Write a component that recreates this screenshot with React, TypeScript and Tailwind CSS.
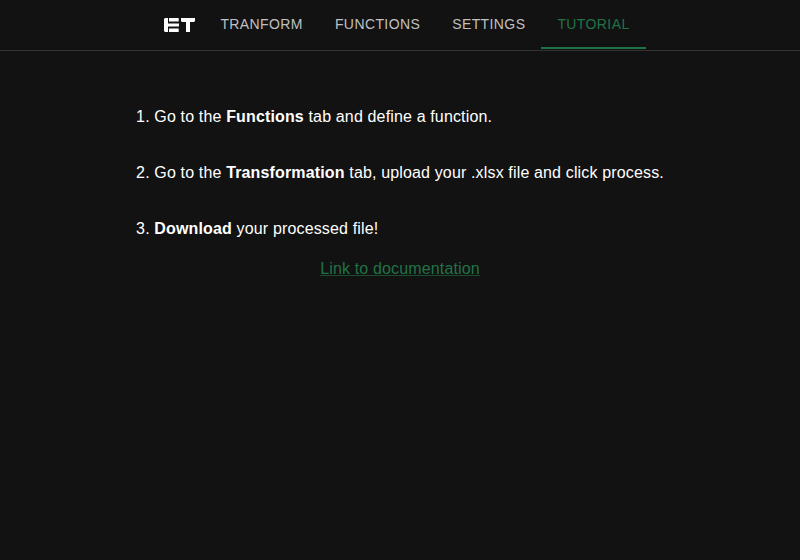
const tabs = ["TRANFORM", "FUNCTIONS", "SETTINGS", "TUTORIAL"];

function Logo() {
  return (
    <svg width="32" height="16" viewBox="0 0 32 16" fill="#fff" aria-label="ET">
      <path d="M2 1H5V6.6H16V9.4H5V15H2L1 14V2ZM6 1H15.7V4.6H6ZM6 11.4H15.7V15H6ZM18 1H32V4L31 5H27V15H23V5H19L18 4Z" />
    </svg>
  );
}

export default function App() {
  return (
    <div className="min-h-screen bg-[#121212] text-white font-['Liberation_Sans',Arial,sans-serif]">
      <header className="flex h-[51px] justify-center border-b border-[#333333]">
        <div className="flex h-[49px]">
          <div className="mr-[9px] ml-[9px] pt-[17px]">
            <Logo />
          </div>
          {tabs.map((tab) => (
            <button
              key={tab}
              className={
                tab === "TUTORIAL"
                  ? "flex h-[49px] items-center border-b-2 border-[#217346] px-4 text-sm tracking-[0.4px] text-[#217346]"
                  : "flex h-[49px] items-center border-b-2 border-transparent px-4 text-sm tracking-[0.4px] text-[#c0c0c0]"
              }
            >
              {tab}
            </button>
          ))}
        </div>
      </header>
      <main className="flex flex-col items-center pt-[54px] tracking-[0.15px]">
        <div className="flex flex-col gap-8 text-base leading-6">
          <p>1. Go to the <b>Functions</b> tab and define a function.</p>
          <p>2. Go to the <b>Transformation</b> tab, upload your .xlsx file and click process.</p>
          <p>3. <b>Download</b> your processed file!</p>
        </div>
        <a href="#" className="mt-4 leading-6 text-[#217346] underline decoration-[#217346]/60">Link to documentation</a>
      </main>
    </div>
  );
}
